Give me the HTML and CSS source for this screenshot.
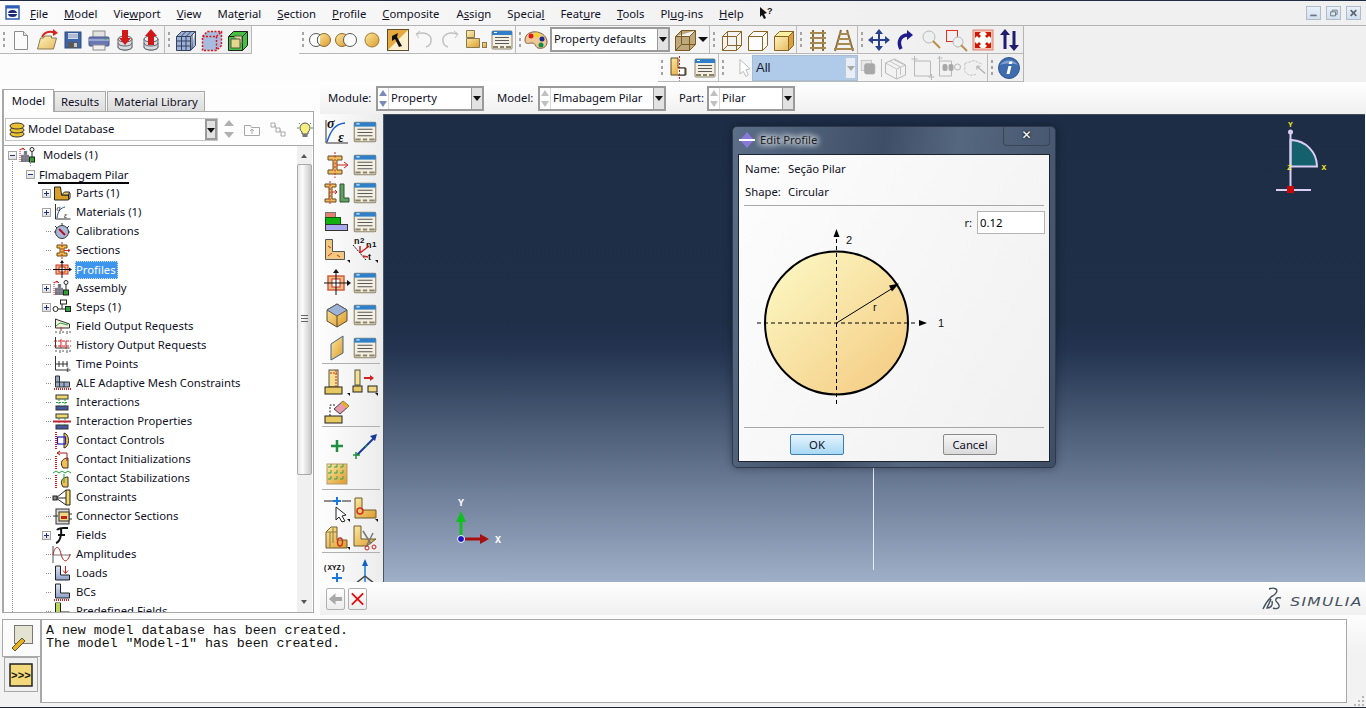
FILE: index.html
```html
<!DOCTYPE html>
<html lang="en">
<head>
<meta charset="utf-8">
<title>Abaqus/CAE</title>
<link rel="stylesheet" href="styles.css">
</head>
<body>
<svg class="defs" aria-hidden="true">
<defs>
<linearGradient id="gold" x1="0" y1="0" x2="1" y2="1"><stop offset="0" stop-color="#fbe9a0"/><stop offset="1" stop-color="#dd9a2c"/></linearGradient>
<linearGradient id="pale" x1="0" y1="0" x2="1" y2="1"><stop offset="0" stop-color="#fdf3bd"/><stop offset="1" stop-color="#e7bb62"/></linearGradient>
<linearGradient id="disc" x1="0.1" y1="0.1" x2="0.85" y2="0.9"><stop offset="0" stop-color="#fbf6c0"/><stop offset="1" stop-color="#f5cf88"/></linearGradient>
<linearGradient id="steel" x1="0" y1="0" x2="0" y2="1"><stop offset="0" stop-color="#dfe6f4"/><stop offset="1" stop-color="#8f9fc8"/></linearGradient>
<symbol id="table" viewBox="0 0 26 26"><rect x="3" y="4" width="20" height="18" rx="1" fill="#f3efe2" stroke="#8b8468"/><rect x="3" y="4" width="20" height="4" fill="#2f80c8"/><rect x="5" y="5" width="3" height="1" fill="#fff"/><path d="M6 10.500h14M6 13.500h14M6 16.500h14" stroke="#5a5a5a"/><path d="M4 20h5M11 20h4M17 20h5" stroke="#8b8468" stroke-width="2"/></symbol>
<symbol id="new" viewBox="0 0 26 26"><path d="M6.500 4.500h9l4 4v14h-13z" fill="#fbfbfb" stroke="#8c8c8c"/><path d="M15.500 4.500v4h4" fill="#e2e2e2" stroke="#8c8c8c"/></symbol>
<symbol id="open" viewBox="0 0 26 26"><path d="M3.500 22l3-11h3l1-2h7v2h5l-3 11z" fill="url(#pale)" stroke="#8a7a50"/><path d="M8 10c3-6 9-6 13-4" fill="none" stroke="#d7261e" stroke-width="2"/><path d="M19 2l5 4-5 3z" fill="#d7261e"/></symbol>
<symbol id="save" viewBox="0 0 26 26"><rect x="5" y="5" width="16" height="16" fill="#3d64a6" stroke="#2d4a80"/><rect x="8" y="6" width="10" height="6" fill="#d3dcea"/><path d="M8 8h10M8 10h10" stroke="#8c9bb8"/><rect x="8" y="15" width="10" height="6" fill="#585858"/><rect x="14" y="16" width="3" height="4" fill="#c8c8c8"/></symbol>
<symbol id="print" viewBox="0 0 26 26"><rect x="7" y="4" width="12" height="7" fill="#e2e2e2" stroke="#8c8c8c"/><rect x="3" y="10" width="20" height="9" rx="1" fill="#6878b4" stroke="#4a5688"/><rect x="3" y="12" width="20" height="2" fill="#9aa6d0"/><rect x="7" y="18" width="12" height="5" fill="#f2f2f2" stroke="#8c8c8c"/><rect x="18" y="12" width="3" height="1" fill="#5dbb5d"/></symbol>
<symbol id="dbdown" viewBox="0 0 26 26"><g fill="#d8dce0" stroke="#5c6268"><ellipse cx="13" cy="20" rx="7" ry="3"/><path d="M6 12v8c0 4 14 4 14 0v-8"/><ellipse cx="13" cy="12" rx="7" ry="3" fill="#eef0f2"/></g><path d="M6 16c0 4 14 4 14 0" fill="none" stroke="#5c6268"/><path d="M10 3h6v8h3l-6 7-6-7h3z" fill="#d01818"/></symbol>
<symbol id="dbup" viewBox="0 0 26 26"><g fill="#d8dce0" stroke="#5c6268"><ellipse cx="13" cy="20" rx="7" ry="3"/><path d="M6 12v8c0 4 14 4 14 0v-8"/><ellipse cx="13" cy="12" rx="7" ry="3" fill="#eef0f2"/></g><path d="M6 16c0 4 14 4 14 0" fill="none" stroke="#5c6268"/><path d="M13 2l6 7h-3v9h-6V9H7z" fill="#d01818"/></symbol>
<symbol id="cmesh" viewBox="0 0 26 26"><path d="M3.500 9.500h14v14h-14zM3.500 9.500l5-5h14l-5 5M17.500 23.500l5-5V4.500" fill="#9db0d8" stroke="#34425e"/><path d="M8.500 9.500v14M13 9.500v14M3.500 14h14M3.500 19h14M8 9.500l5-5M13 9.500l5-5M19 8v14" fill="none" stroke="#34425e"/></symbol>
<symbol id="cred" viewBox="0 0 26 26"><path d="M3.500 9.500h14v14h-14zM3.500 9.500l5-5h14v14l-5 5v-14z" fill="#a8bce0"/><path d="M3.500 9.500h14v14h-14zM3.500 9.500l5-5h14v14l-5 5M17.500 9.500l5-5" fill="none" stroke="#e01010" stroke-width="1.500" stroke-dasharray="2 1.500"/></symbol>
<symbol id="cgreen" viewBox="0 0 26 26"><path d="M3.500 9.500h14v14h-14zM3.500 9.500l5-5h14v14l-5 5" fill="#44c040" stroke="#222"/><path d="M6 12h9v9H6zM9 9h8v8" fill="#e4d88c" stroke="#555"/><path d="M17.500 9.500l5-5" stroke="#222"/></symbol>
<symbol id="venn1" viewBox="0 0 26 26"><circle cx="9" cy="13" r="6.500" fill="#fff" stroke="#555"/><circle cx="17" cy="13" r="6.500" fill="url(#gold)" stroke="#8a6a30"/><path d="M13 7.700a6.500 6.500 0 0 0 0 10.600" fill="#fff" stroke="#555"/></symbol>
<symbol id="venn2" viewBox="0 0 26 26"><circle cx="9" cy="13" r="6.500" fill="url(#gold)" stroke="#8a6a30"/><circle cx="17" cy="13" r="6.500" fill="#fff" stroke="#555"/></symbol>
<symbol id="circ" viewBox="0 0 26 26"><circle cx="13" cy="13" r="7" fill="url(#gold)" stroke="#a07a30"/></symbol>
<symbol id="pick" viewBox="0 0 26 26"><rect x="2.500" y="2.500" width="21" height="21" fill="#e8a840" stroke="#5a5030"/><path d="M3 23L23 3v20z" fill="#fbf1d0"/><path d="M7 9l6-3-1 4 5 9-3 1-4-8-3 2z" fill="#111"/></symbol>
<symbol id="undo" viewBox="0 0 26 26"><path d="M6 7c8-3 15 1 14 7 0 3-2 5-5 6" fill="none" stroke="#c0c0c0" stroke-width="1.500"/><path d="M9 4L5 7l3 4" fill="none" stroke="#c0c0c0"/></symbol>
<symbol id="redo" viewBox="0 0 26 26"><path d="M20 7c-8-3-15 1-14 7 0 3 2 5 5 6" fill="none" stroke="#c0c0c0" stroke-width="1.500"/><path d="M17 4l4 3-3 4" fill="none" stroke="#c0c0c0"/></symbol>
<symbol id="part" viewBox="0 0 26 26"><path d="M3.500 3.500h8v7h-8z" fill="url(#pale)" stroke="#8a7a50"/><path d="M3.500 11.500h13v9h-13z" fill="url(#gold)" stroke="#8a7a50"/><rect x="19.500" y="15.500" width="4" height="5" fill="url(#gold)" stroke="#8a7a50"/></symbol>
<symbol id="palette" viewBox="0 0 26 26"><path d="M3 13c0-6 6-9 12-8 6 1 10 5 10 10 0 6-6 7-9 6-3-1-2-5-6-5-3 0-7 2-7-3z" fill="#f0c898" stroke="#7a6040"/><circle cx="9" cy="9" r="2.500" fill="#e01818"/><circle cx="15" cy="8" r="2.500" fill="#f0d818"/><circle cx="20" cy="12" r="2.500" fill="#18288c"/><circle cx="19" cy="18" r="2.500" fill="#109040"/></symbol>
<symbol id="cshade" viewBox="0 0 26 26"><path d="M3.500 9.500h14v14h-14zM3.500 9.500l6-6h14v14l-6 6v-14l6-6" fill="#bda97c" stroke="#7a5a20"/><path d="M3.500 23.500l6-6h14M9.500 3.500v14" fill="none" stroke="#7a5a20"/></symbol>
<symbol id="wire" viewBox="0 0 26 26"><path d="M4.500 9.500h14v14h-14zM4.500 9.500l5-5h14v14l-5 5M18.500 9.500l5-5M9.500 4.500v14l-5 5M9.500 18.500h14" fill="none" stroke="#8a6420"/></symbol>
<symbol id="hid" viewBox="0 0 26 26"><path d="M4.500 9.500h14v14h-14zM4.500 9.500l5-5h14v14l-5 5M18.500 9.500l5-5" fill="#fdfdfd" stroke="#8a6420"/></symbol>
<symbol id="solid" viewBox="0 0 26 26"><path d="M4.500 9.500h14v14h-14z" fill="url(#pale)" stroke="#8a6420"/><path d="M4.500 9.500l5-5h14l-5 5z" fill="#fdf0a0" stroke="#8a6420"/><path d="M18.500 9.500l5-5v14l-5 5z" fill="#d8a040" stroke="#8a6420"/></symbol>
<symbol id="rail1" viewBox="0 0 26 26"><path d="M8 3v21M18 3v21" stroke="#8a6e3c" stroke-width="2"/><path d="M5 6h16M5 11h16M5 16h16M5 21h16" stroke="#a88a50" stroke-width="2"/></symbol>
<symbol id="rail2" viewBox="0 0 26 26"><path d="M10 3L4 24M16 3l6 21" stroke="#8a6e3c" stroke-width="2"/><path d="M8 7h10M7 12h12M6 17h14M3 22h20" stroke="#a88a50" stroke-width="2"/></symbol>
<symbol id="move" viewBox="0 0 26 26"><path d="M13 4v18M4 13h18" stroke="#28408c" stroke-width="2"/><path d="M13 2l4 5H9zM13 24l4-5H9zM2 13l5-4v8zM24 13l-5-4v8z" fill="#28408c"/></symbol>
<symbol id="rot" viewBox="0 0 26 26"><path d="M9 22C5 14 9 8 16 8" fill="none" stroke="#201c8c" stroke-width="3.500"/><path d="M15 3l6 5-6 5z" fill="#201c8c"/></symbol>
<symbol id="zoom" viewBox="0 0 26 26"><circle cx="11" cy="10" r="6" fill="#eef0f0" stroke="#b8b8b8"/><path d="M15 14l7 7" stroke="#b89048" stroke-width="2"/></symbol>
<symbol id="zbox" viewBox="0 0 26 26"><rect x="2.500" y="3.500" width="11" height="11" fill="none" stroke="#e03020"/><circle cx="14" cy="15" r="5" fill="#eef0f0" stroke="#b8b8b8"/><path d="M17 18l6 6" stroke="#b89048" stroke-width="2"/></symbol>
<symbol id="fit" viewBox="0 0 26 26"><rect x="3" y="3" width="20" height="20" fill="#f2c4b8" stroke="#e08070"/><rect x="5" y="5" width="16" height="16" fill="#fff"/><path d="M5 5h6l-2 2 2 2-2 2-2-2-2 2zM21 5h-6l2 2-2 2 2 2 2-2 2 2zM5 21h6l-2-2 2-2-2-2-2 2-2-2zM21 21h-6l2-2-2-2 2-2 2 2 2-2z" fill="#cc1800"/></symbol>
<symbol id="flip" viewBox="0 0 26 26"><path d="M9 22V7M18 4v15" stroke="#201c70" stroke-width="3"/><path d="M9 2l5 6H4zM18 24l5-6H13z" fill="#201c70"/></symbol>
<symbol id="lsel" viewBox="0 0 26 26"><path d="M5 3h7v10h8v7H5z" fill="url(#gold)" stroke="#5a4a20"/><path d="M12 13h7v7h-7" fill="#fff" stroke="#222"/><path d="M13.500 1v25" stroke="#e01010" stroke-dasharray="2 1.500"/></symbol>
<symbol id="cursor" viewBox="0 0 26 26"><path d="M7 3l12 11-5 1 3 6-3 2-3-6-4 3z" fill="#fff" stroke="#b0b0b0"/></symbol>
<symbol id="g1" viewBox="0 0 26 26"><rect x="5" y="4" width="12" height="12" fill="#e8e8e8" stroke="#c0c0c0"/><rect x="9" y="8" width="12" height="12" rx="2" fill="#a8a8a8" stroke="#a8a8a8"/></symbol>
<symbol id="g2" viewBox="0 0 26 26"><path d="M3 8l9-4 11 6v10l-9 4-11-6z" fill="none" stroke="#b8b8b8"/><path d="M3 8l11 6v10M14 14l9-4M7 6l11 6v8M11 4.500l10 5" fill="none" stroke="#c4c4c4"/></symbol>
<symbol id="g3" viewBox="0 0 26 26"><path d="M5 6h16v15H5z" fill="none" stroke="#b8b8b8"/><path d="M2 4h6M5 1v6M19 22h6M22 19v6" stroke="#b8b8b8"/></symbol>
<symbol id="g4" viewBox="0 0 26 26"><path d="M3 6h12v15H3z" fill="none" stroke="#b8b8b8"/><path d="M1 3h5M3 1v5" stroke="#b8b8b8"/><rect x="6" y="9" width="5" height="7" rx="2" fill="#a8a8a8"/><rect x="12" y="9" width="5" height="7" rx="2" fill="#a8a8a8"/><circle cx="21" cy="12" r="3" fill="none" stroke="#b8b8b8"/></symbol>
<symbol id="g5" viewBox="0 0 26 26"><path d="M2 8l10-3 9 4M2 8v9l5 4 7-1" fill="none" stroke="#c0c0c0" stroke-dasharray="3 1"/><path d="M15 11l9 8" stroke="#b0b0b0" stroke-width="1.500"/><path d="M15 11h4M15 11v4" stroke="#b0b0b0"/></symbol>
<symbol id="info" viewBox="0 0 26 26"><circle cx="13" cy="13" r="10.500" fill="#3f6cae" stroke="#2f5590"/><path d="M4 10a10 8 0 0 1 18 0c-5-2-13-2-18 0z" fill="#7e9fcf"/><path d="M13.500 6.500h3l-.8 2.500h-3zM12.500 11h3l-2 8h-3z" fill="#fff"/></symbol>

<symbol id="t-models" viewBox="0 0 20 19"><path d="M3 16V9h3V5h3v4h2v7z" fill="#707080"/><path d="M3 12h8M3 9h8M6 5v11M9 5v11" stroke="#a0a0a8" stroke-width=".5"/><path d="M2 3v14" stroke="#d02020" stroke-dasharray="1 1"/><path d="M5 2v2M2 4l3-2 2 2" stroke="#d02020" fill="none"/><circle cx="14" cy="3.500" r="2" fill="#fff" stroke="#222"/><path d="M14 6v5" stroke="#222"/><rect x="11.500" y="11" width="5" height="5" fill="#30a030" stroke="#222"/></symbol>
<symbol id="t-parts" viewBox="0 0 20 19"><path d="M2.500 3h6l1 8h7v5h-14z" fill="#d9a028" stroke="#222"/><path d="M9.500 11l3-3h5l-1 3z M16.500 16l1.500-2v-5" fill="#f2cc70" stroke="#222"/></symbol>
<symbol id="t-mat" viewBox="0 0 20 19"><path d="M3.500 1v15h15" fill="none" stroke="#333"/><path d="M5 15c1-8 4-10 8-11" fill="none" stroke="#2848a8"/><text x="4.500" y="8" class="sy">σ</text><text x="12" y="15" class="sy">ε</text></symbol>
<symbol id="t-cal" viewBox="0 0 20 19"><circle cx="10" cy="10" r="6.500" fill="#a8b8d8" stroke="#333"/><path d="M7 7l6 6" stroke="#b01020" stroke-width="2"/><path d="M10 1v2M3 4l2 2M17 4l-2 2M2 10h1M18 10h-1" stroke="#333"/></symbol>
<symbol id="t-sec" viewBox="0 0 20 19"><path d="M5 4h10v3h-3v5h3v3H5v-3h3V7H5z" fill="#efbd50" stroke="#6a4a10"/><path d="M10 1v17" stroke="#d02020" stroke-dasharray="2 1"/><path d="M12 9.500h6M16 8l2 1.500-2 1.500" stroke="#d02020" fill="none"/></symbol>
<symbol id="t-prof" viewBox="0 0 20 19"><rect x="4" y="5" width="12" height="9" fill="#eebb88" stroke="#d03020"/><rect x="7" y="7" width="6" height="5" fill="#fff" stroke="#d03020"/><path d="M10 1v17M1 9.500h18" stroke="#111"/><path d="M10 0l2 3H8zM20 9.500l-3-2v4z" fill="#111"/></symbol>
<symbol id="t-steps" viewBox="0 0 20 19"><circle cx="3.500" cy="11" r="2.500" fill="#fff" stroke="#222"/><path d="M6 11h8M10 11V6" stroke="#222"/><rect x="8.500" y="2" width="6" height="4" fill="#fff" stroke="#222"/><rect x="13.500" y="8.500" width="5" height="5" fill="#30a040" stroke="#222"/></symbol>
<symbol id="t-field" viewBox="0 0 20 19"><path d="M3.500 2v9h14V7L6 3z" fill="#f4f0e0" stroke="#333"/><path d="M4 9l4-3 8 2" stroke="#30a040" fill="none"/><path d="M3 15h2M8 14v3M10 15h2M15 14v3M17 15h2" stroke="#555"/><path d="M9 10v4" stroke="#d02020"/></symbol>
<symbol id="t-hist" viewBox="0 0 20 19"><path d="M3.500 1v11h14" fill="none" stroke="#333"/><path d="M2 5h17M2 10h17" stroke="#d02020" stroke-dasharray="3 1"/><path d="M9 3v9M14 5v8" stroke="#d02020"/><path d="M3 15h2M8 14v3M10 15h2M15 14v3M17 15h2" stroke="#555"/></symbol>
<symbol id="t-time" viewBox="0 0 20 19"><path d="M3.500 1v14h15" fill="none" stroke="#333"/><path d="M3 9h13M7 6v6M11 6v6M15 6v6" stroke="#333"/><text x="14.500" y="17" class="sy">t</text></symbol>
<symbol id="t-ale" viewBox="0 0 20 19"><path d="M3.500 12V2h4v6h10v5h-14z" fill="#9aa8c8" stroke="#333"/><path d="M7.500 8v5M12 8v5M3.500 8h4" stroke="#333"/><path d="M2 15h17" stroke="#d02020" stroke-width="2" stroke-dasharray="1 1"/></symbol>
<symbol id="t-int" viewBox="0 0 20 19"><rect x="4" y="2" width="12" height="4" fill="#f0d870" stroke="#333"/><rect x="4" y="13" width="12" height="4" fill="#4858a0" stroke="#333"/><path d="M7 6v7M13 6v7M4 9.500h12" stroke="#20a040" stroke-dasharray="2 1"/></symbol>
<symbol id="t-intp" viewBox="0 0 20 19"><rect x="4" y="2" width="12" height="4" fill="#f0d870" stroke="#333"/><rect x="4" y="13" width="12" height="4" fill="#4858a0" stroke="#333"/><path d="M7 6v7M13 6v7" stroke="#20a040" stroke-dasharray="2 1"/><path d="M1 9.500h18" stroke="#c02030" stroke-width="2"/></symbol>
<symbol id="t-cc" viewBox="0 0 20 19"><path d="M12 2c6 1 6 14 0 15z" fill="#f0c050" stroke="#333"/><path d="M4 1v17" stroke="#d02020" stroke-width="2" stroke-dasharray="1 1"/><rect x="5.500" y="6" width="8" height="7" fill="none" stroke="#2020c0" stroke-width="1.200"/></symbol>
<symbol id="t-ci" viewBox="0 0 20 19"><path d="M11 18c-4-6 0-10 5-10v10z" fill="#f0c050" stroke="#333"/><path d="M4 6v13" stroke="#d02020" stroke-width="2" stroke-dasharray="1 1"/><path d="M5 3h10v8M5 3l3-2M5 3l3 2" fill="none" stroke="#b01818"/></symbol>
<symbol id="t-cs" viewBox="0 0 20 19"><path d="M11 18c-4-6 0-10 5-10v10z" fill="#f0c050" stroke="#333"/><path d="M4 6v13" stroke="#d02020" stroke-width="2" stroke-dasharray="1 1"/><path d="M1 4l3-2 3 2 3-2 3 2 3-2 3 2" fill="none" stroke="#20a040"/><path d="M12 5v9" stroke="#20a040"/></symbol>
<symbol id="t-con" viewBox="0 0 20 19"><path d="M14 2h4v15h-4z" fill="#f4d860" stroke="#222"/><path d="M14 2L4 10l10 7M3 10h11" fill="none" stroke="#222"/><rect x="1" y="8" width="4" height="4" fill="#888" stroke="#222"/></symbol>
<symbol id="t-conn" viewBox="0 0 20 19"><rect x="4" y="2" width="13" height="15" fill="#d8d8d8" stroke="#333"/><rect x="7" y="5" width="10" height="9" fill="#f0d880" stroke="#333"/><rect x="9" y="9" width="6" height="3" fill="#c02020"/><path d="M1 9h5M17 7h3M17 12h3" stroke="#333"/></symbol>
<symbol id="t-f" viewBox="0 0 20 19"><path d="M5 4c2-3 6-2 11-2M9 3c1 5-1 13-5 14M6 9h7" fill="none" stroke="#111" stroke-width="2"/></symbol>
<symbol id="t-amp" viewBox="0 0 20 19"><path d="M1 1v17" stroke="#555"/><path d="M1 10h18" stroke="#777"/><path d="M1 10C3 0 7 0 9 9c2 9 7 9 9 0" fill="none" stroke="#b02020"/></symbol>
<symbol id="t-load" viewBox="0 0 20 19"><path d="M3.500 2h5v9h9v5h-14z" fill="url(#steel)" stroke="#222"/><path d="M13.500 2v7M11 6.500l2.500 3 2.500-3" fill="none" stroke="#d02020"/></symbol>
<symbol id="t-bc" viewBox="0 0 20 19"><path d="M3.500 1h5v9h9v5h-14z" fill="url(#steel)" stroke="#222"/><path d="M2 17h15" stroke="#d02020" stroke-width="2" stroke-dasharray="1 1"/></symbol>
<symbol id="t-pre" viewBox="0 0 20 19"><path d="M3.500 1h5v9h9v5h-14z" fill="url(#steel)" stroke="#222"/><rect x="4" y="1" width="4" height="9" fill="#b8d858"/></symbol>

<symbol id="s-sig" viewBox="0 0 28 28"><path d="M3 2v23h22" fill="none" stroke="#333"/><path d="M4 24C8 12 12 6 22 5" fill="none" stroke="#1860c8" stroke-width="1.500"/><text x="4" y="10" class="sg">σ</text><text x="15" y="24" class="sg">ε</text></symbol>
<symbol id="s-ib" viewBox="0 0 28 28"><path d="M5 5h14v4h-5v10h5v4H5v-4h5V9H5z" fill="#efbd60" stroke="#6a4a20"/><path d="M12 1v26" stroke="#d02020" stroke-dasharray="2 1.500"/><path d="M14 14h10M21 11l4 3-4 3" fill="none" stroke="#d02020"/></symbol>
<symbol id="s-ibl" viewBox="0 0 28 28"><path d="M2 5h11v3h-4v12h4v3H2v-3h4V8H2z" fill="#efbd60" stroke="#6a4a20"/><path d="M7 2v24" stroke="#d02020" stroke-dasharray="2 1.500"/><path d="M9 13h4M12 11l2 2-2 2" fill="none" stroke="#d02020"/><path d="M17 5h4v14h5v4h-9z" fill="#60a060" stroke="#305030"/></symbol>
<symbol id="s-lay" viewBox="0 0 28 28"><rect x="2.500" y="4.500" width="10" height="5" fill="#e88070" stroke="#777"/><rect x="2.500" y="9.500" width="15" height="7" fill="#10b010" stroke="#076007"/><rect x="2.500" y="16.500" width="22" height="6" fill="#a8a8f0" stroke="#333"/></symbol>
<symbol id="s-lo" viewBox="0 0 28 28"><path d="M2.500 3.500h7v12h12v8h-19z" fill="#f0c880" stroke="#555"/><path d="M5 10l3 2M5 20l4-3M14 19l3 2" stroke="#d03020"/><path d="M24 24h3v3z" fill="#111"/></symbol>
<symbol id="s-nt" viewBox="0 0 28 28"><text x="3" y="8" class="st">n</text><text x="9" y="7" class="st2">2</text><text x="15" y="12" class="st">n</text><text x="21" y="11" class="st2">1</text><text x="17" y="24" class="st">t</text><path d="M2 9l13 15" stroke="#111" stroke-dasharray="2 1"/><path d="M9 17l0-7M9 17l9-7M12 20l5 1" stroke="#d02020" stroke-width="1.500"/><path d="M24 24h3v3z" fill="#111"/></symbol>
<symbol id="s-pr" viewBox="0 0 28 28"><rect x="5" y="7" width="16" height="14" fill="#eebb88" stroke="#d06040" stroke-width="1.500"/><rect x="9" y="10" width="8" height="8" fill="#fff" stroke="#d03020"/><path d="M13 2v24M1 14h25" stroke="#111"/><path d="M13 0l3 4h-6zM28 14l-4-3v6z" fill="#111"/></symbol>
<symbol id="s-cube" viewBox="0 0 28 28"><path d="M14 3l10 6v11l-10 6L4 20V9z" fill="url(#gold)" stroke="#5a4a30"/><path d="M14 3l10 6-10 6L4 9z" fill="#9db4d8" stroke="#5a5a60"/><path d="M14 15v11" stroke="#5a4a30"/></symbol>
<symbol id="s-shell" viewBox="0 0 28 28"><path d="M8 10l12-8v17L8 26z" fill="url(#gold)" stroke="#40608c"/></symbol>
<symbol id="s-as" viewBox="0 0 28 28"><rect x="6" y="1" width="9" height="17" fill="#f6e090" stroke="#554"/><rect x="2" y="18" width="17" height="7" fill="#e8c860" stroke="#222"/><path d="M7 4h7M13 1v18" stroke="#d02020" stroke-dasharray="2 1"/><path d="M24 24h3v3z" fill="#111"/></symbol>
<symbol id="s-asb" viewBox="0 0 28 28"><rect x="4" y="1" width="5" height="15" fill="#f6e090" stroke="#554"/><rect x="2" y="17" width="9" height="6" fill="#e8c860" stroke="#222"/><rect x="17" y="17" width="9" height="6" fill="#f0d880" stroke="#222"/><path d="M13 9h7" stroke="#d02020" stroke-width="2"/><path d="M19 6l4 3-4 3z" fill="#d02020"/><path d="M24 24h3v3z" fill="#111"/></symbol>
<symbol id="s-er" viewBox="0 0 28 28"><rect x="2" y="19" width="17" height="7" fill="#e8c860" stroke="#222"/><path d="M7 19V8h5" fill="none" stroke="#222" stroke-dasharray="2 1.500"/><path d="M11 12l9-8 6 5-9 8z" fill="#e89aa8" stroke="#444"/><path d="M18 6l6 5 2-2-6-5z" fill="#e8b020"/></symbol>
<symbol id="s-plus" viewBox="0 0 28 28"><path d="M14 8v12M8 14h12" stroke="#209040" stroke-width="2.500"/></symbol>
<symbol id="s-line" viewBox="0 0 28 28"><path d="M6 23L24 5" stroke="#1a3a98" stroke-width="2"/><path d="M26 2l-2 7-5-5z" fill="#1a3a98"/><path d="M2 23h7M5 20v7M14 15l2-2" stroke="#209040" stroke-width="1.500"/></symbol>
<symbol id="s-grid" viewBox="0 0 28 28"><rect x="4" y="4" width="20" height="20" fill="url(#gold)" stroke="#b89868"/><path d="M5 7h18M5 13h18M5 19h18M8 4v18M14 4v18M20 4v18" stroke="#30a050" stroke-dasharray="3 3"/></symbol>
<symbol id="s-pkp" viewBox="0 0 28 28"><path d="M1 6h9M19 6h9" stroke="#222"/><path d="M14 2v8M10 6h8" stroke="#1878e0" stroke-width="2"/><path d="M13 12l10 8-4 1 3 5-3 1-3-5-3 3z" fill="#fff" stroke="#222"/><path d="M24 24h3v3z" fill="#111"/></symbol>
<symbol id="s-rnd" viewBox="0 0 28 28"><path d="M4 3h7v12h14v8H4z" fill="url(#gold)" stroke="#6a5a30"/><circle cx="9" cy="16" r="3" fill="none" stroke="#d03020" stroke-width="1.500"/><path d="M24 24h3v3z" fill="#111"/></symbol>
<symbol id="s-blk" viewBox="0 0 28 28"><path d="M3 9l5-5h6v13h10v8H3z" fill="url(#gold)" stroke="#6a5a30"/><path d="M7 9v15M10 5v15M3 9h11" stroke="#8a7a40"/><ellipse cx="17" cy="19" rx="2.500" ry="4" fill="none" stroke="#d03020" stroke-width="1.500"/><path d="M24 24h3v3z" fill="#111"/></symbol>
<symbol id="s-cut" viewBox="0 0 28 28"><path d="M3 3h7v13h15l-9 7H3z" fill="url(#gold)" stroke="#6a5a30"/><path d="M12 8l8 13M22 10l-6 12" stroke="#777" stroke-width="1.500"/><circle cx="16" cy="25" r="2" fill="none" stroke="#c02020"/><circle cx="23" cy="24" r="2" fill="none" stroke="#c02020"/></symbol>
<symbol id="s-xyz" viewBox="0 0 28 28"><text x="0" y="12" class="sx">(XYZ)</text><path d="M14 15v10M9 20h10" stroke="#1878e0" stroke-width="2"/></symbol>
<symbol id="s-dat" viewBox="0 0 28 28"><path d="M14 4v22" stroke="#1878e0" stroke-width="1.500"/><path d="M14 1l3 7h-6z" fill="#1060c0"/><path d="M14 18L4 26M14 18l10 8" stroke="#444" stroke-width="1.500"/></symbol>
</defs>
</svg>

<div class="app">
  <header class="menubar">
    <svg class="appicon" viewBox="0 0 15 15"><rect x="1" y="1" width="13" height="13" fill="#fff" stroke="#2e5eb8" stroke-width="1.500"/><rect x="1" y="1" width="13" height="2.500" fill="#2e5eb8"/><ellipse cx="7.500" cy="8.500" rx="4.500" ry="3.500" fill="#1a2a78"/><path d="M3 8.500h9" stroke="#fff"/></svg>
    <nav class="menus">
      <span class="m"><u>F</u>ile</span>
      <span class="m"><u>M</u>odel</span>
      <span class="m">Vie<u>w</u>port</span>
      <span class="m"><u>V</u>iew</span>
      <span class="m">Mat<u>e</u>rial</span>
      <span class="m"><u>S</u>ection</span>
      <span class="m"><u>P</u>rofile</span>
      <span class="m"><u>C</u>omposite</span>
      <span class="m">A<u>s</u>sign</span>
      <span class="m">Specia<u>l</u></span>
      <span class="m">Feat<u>u</u>re</span>
      <span class="m"><u>T</u>ools</span>
      <span class="m">Pl<u>u</u>g-ins</span>
      <span class="m"><u>H</u>elp</span>
      <svg class="whatsthis" viewBox="0 0 14 14"><path d="M1 1l7 6-3 1 2 4-2 1-2-4-2 2z" fill="#111"/><text x="8" y="8" class="wq">?</text></svg>
    </nav>
    <div class="winbtns">
      <span class="wb"><svg viewBox="0 0 16 14"><path d="M4 10h8" stroke="#6a7484" stroke-width="2"/></svg></span>
      <span class="wb"><svg viewBox="0 0 16 14"><path d="M4.500 5.500h6v5h-6zM6.500 5V3.500h6v5H11" fill="none" stroke="#5a6474"/></svg></span>
      <span class="wb"><svg viewBox="0 0 16 14"><path d="M4.500 3.500l7 7M11.500 3.500l-7 7" stroke="#5a6474" stroke-width="2"/></svg></span>
    </div>
  </header>

  <section class="toolbars">
    <div class="tb-rows">
      <div class="tb-row">
        <div class="tg tg-file">
          <i class="grip"></i>
          <svg class="i"><use href="#new"/></svg><svg class="i"><use href="#open"/></svg><svg class="i"><use href="#save"/></svg><svg class="i"><use href="#print"/></svg><svg class="i"><use href="#dbdown"/></svg><svg class="i"><use href="#dbup"/></svg>
          <b class="sep"></b><i class="grip"></i>
          <svg class="i"><use href="#cmesh"/></svg><svg class="i"><use href="#cred"/></svg><svg class="i"><use href="#cgreen"/></svg>
        </div>
        <div class="tg tg-view">
          <i class="grip"></i>
          <svg class="i"><use href="#venn1"/></svg><svg class="i"><use href="#venn2"/></svg><svg class="i"><use href="#circ"/></svg><svg class="i"><use href="#pick"/></svg><svg class="i"><use href="#undo"/></svg><svg class="i"><use href="#redo"/></svg><svg class="i"><use href="#part"/></svg><svg class="i"><use href="#table"/></svg>
          <b class="sep"></b><i class="grip"></i>
          <svg class="i i-pal"><use href="#palette"/></svg>
          <div class="combo combo-def"><span class="ctext">Property defaults</span><span class="carrow"></span></div>
          <svg class="i i-sh"><use href="#cshade"/></svg><span class="drop"></span>
          <b class="sep"></b><i class="grip"></i>
          <svg class="i"><use href="#wire"/></svg><svg class="i"><use href="#hid"/></svg><svg class="i"><use href="#solid"/></svg>
          <b class="sep"></b><i class="grip"></i>
          <svg class="i"><use href="#rail1"/></svg><svg class="i"><use href="#rail2"/></svg>
          <b class="sep"></b><i class="grip"></i>
          <svg class="i"><use href="#move"/></svg><svg class="i"><use href="#rot"/></svg><svg class="i"><use href="#zoom"/></svg><svg class="i"><use href="#zbox"/></svg><svg class="i"><use href="#fit"/></svg><svg class="i"><use href="#flip"/></svg>
        </div>
      </div>
      <div class="tb-row tb-row2">
        <div class="tg tg-sel">
          <i class="grip"></i>
          <svg class="i"><use href="#lsel"/></svg><svg class="i"><use href="#table"/></svg>
          <b class="sep"></b><i class="grip"></i>
          <svg class="i i-cur"><use href="#cursor"/></svg>
          <div class="combo-all"><span>All</span><span class="allarrow"></span></div>
          <svg class="i i-g1"><use href="#g1"/></svg>
          <b class="sep sep-soft"></b>
          <svg class="i i-w"><use href="#g2"/></svg><svg class="i i-w"><use href="#g3"/></svg><svg class="i i-w"><use href="#g4"/></svg><svg class="i i-n"><use href="#g5"/></svg>
          <b class="sep"></b><i class="grip"></i>
          <svg class="i"><use href="#info"/></svg>
        </div>
      </div>
    </div>
    <div class="tb-fill"></div>
  </section>

  <main class="workspace">
    <aside class="leftpanel">
      <div class="tabs">
        <span class="tab tab-on">Model</span>
        <span class="tab">Results</span>
        <span class="tab">Material Library</span>
      </div>
      <div class="panel">
        <div class="dbbar">
          <div class="dbcombo">
            <svg class="dbicon" viewBox="0 0 18 16"><g fill="#e8c030" stroke="#333"><ellipse cx="9" cy="12" rx="7" ry="3"/><ellipse cx="9" cy="8" rx="7" ry="3"/><ellipse cx="9" cy="4" rx="7" ry="3"/></g></svg>
            <span class="ctext">Model Database</span><span class="carrow"></span>
          </div>
          <svg class="updn" viewBox="0 0 14 22"><path d="M7 2l5 6H2zM7 20l5-6H2z" fill="#b0b0b0"/></svg>
          <svg class="dbtool dbt1" viewBox="0 0 18 16"><path d="M1.500 4.500h6l1 2h8v8h-15z" fill="none" stroke="#a8a8a8"/><path d="M9 13V8M7 10l2-2 2 2" fill="none" stroke="#a8a8a8"/></svg>
          <svg class="dbtool dbt2" viewBox="0 0 18 16"><path d="M2 2h4v4H2zM7 7h4v4H7zM12 11h4v4h-4zM6 4l1 3M11 9l1 2" fill="none" stroke="#a8a8a8"/></svg>
          <svg class="dbtool dbt3" viewBox="0 0 18 18"><path d="M6 11a5 5 0 1 1 6 0v2H6z" fill="#f6f080" stroke="#555"/><rect x="6.500" y="13" width="5" height="3" fill="#777"/><path d="M1 7h2M15 7h2M3 2l1 1M15 2l-1 1" stroke="#40a040"/></svg>
        </div>
        <div class="treebox">
          <div class="tree">
            <div class="row l0"><span class="exp minus"></span><svg class="ti"><use href="#t-models"/></svg><span class="lb lb0">Models (1)</span></div>
            <div class="row l1"><span class="exp minus"></span><span class="lb lb1 cur">Flmabagem Pilar</span></div>
            <div class="row l2"><span class="exp plus"></span><svg class="ti"><use href="#t-parts"/></svg><span class="lb">Parts (1)</span></div>
            <div class="row l2"><span class="exp plus"></span><svg class="ti"><use href="#t-mat"/></svg><span class="lb">Materials (1)</span></div>
            <div class="row l2"><span class="stub"></span><svg class="ti"><use href="#t-cal"/></svg><span class="lb">Calibrations</span></div>
            <div class="row l2"><span class="stub"></span><svg class="ti"><use href="#t-sec"/></svg><span class="lb">Sections</span></div>
            <div class="row l2"><span class="stub"></span><svg class="ti"><use href="#t-prof"/></svg><span class="lb sel">Profiles</span></div>
            <div class="row l2"><span class="exp plus"></span><svg class="ti"><use href="#t-models"/></svg><span class="lb">Assembly</span></div>
            <div class="row l2"><span class="exp plus"></span><svg class="ti"><use href="#t-steps"/></svg><span class="lb">Steps (1)</span></div>
            <div class="row l2"><span class="stub"></span><svg class="ti"><use href="#t-field"/></svg><span class="lb">Field Output Requests</span></div>
            <div class="row l2"><span class="stub"></span><svg class="ti"><use href="#t-hist"/></svg><span class="lb">History Output Requests</span></div>
            <div class="row l2"><span class="stub"></span><svg class="ti"><use href="#t-time"/></svg><span class="lb">Time Points</span></div>
            <div class="row l2"><span class="stub"></span><svg class="ti"><use href="#t-ale"/></svg><span class="lb">ALE Adaptive Mesh Constraints</span></div>
            <div class="row l2"><span class="stub"></span><svg class="ti"><use href="#t-int"/></svg><span class="lb">Interactions</span></div>
            <div class="row l2"><span class="stub"></span><svg class="ti"><use href="#t-intp"/></svg><span class="lb">Interaction Properties</span></div>
            <div class="row l2"><span class="stub"></span><svg class="ti"><use href="#t-cc"/></svg><span class="lb">Contact Controls</span></div>
            <div class="row l2"><span class="stub"></span><svg class="ti"><use href="#t-ci"/></svg><span class="lb">Contact Initializations</span></div>
            <div class="row l2"><span class="stub"></span><svg class="ti"><use href="#t-cs"/></svg><span class="lb">Contact Stabilizations</span></div>
            <div class="row l2"><span class="stub"></span><svg class="ti"><use href="#t-con"/></svg><span class="lb">Constraints</span></div>
            <div class="row l2"><span class="stub"></span><svg class="ti"><use href="#t-conn"/></svg><span class="lb">Connector Sections</span></div>
            <div class="row l2"><span class="exp plus"></span><svg class="ti"><use href="#t-f"/></svg><span class="lb">Fields</span></div>
            <div class="row l2"><span class="stub"></span><svg class="ti"><use href="#t-amp"/></svg><span class="lb">Amplitudes</span></div>
            <div class="row l2"><span class="stub"></span><svg class="ti"><use href="#t-load"/></svg><span class="lb">Loads</span></div>
            <div class="row l2"><span class="stub"></span><svg class="ti"><use href="#t-bc"/></svg><span class="lb">BCs</span></div>
            <div class="row l2"><span class="stub"></span><svg class="ti"><use href="#t-pre"/></svg><span class="lb">Predefined Fields</span></div>
          </div>
          <div class="vscroll">
            <span class="sarrow sup"></span>
            <span class="thumb"><i></i></span>
            <span class="strack"></span>
            <span class="sarrow sdn"></span>
          </div>
        </div>
      </div>
    </aside>

    <div class="right">
      <div class="context">
        <span class="clabel cl-mod">Module:</span>
        <div class="combo cb-mod"><span class="spin"></span><span class="ctext">Property</span><span class="carrow"></span></div>
        <span class="clabel cl-model">Model:</span>
        <div class="combo cb-model"><span class="spin spin-off"></span><span class="ctext">Flmabagem Pilar</span><span class="carrow"></span></div>
        <span class="clabel cl-part">Part:</span>
        <div class="combo cb-part"><span class="spin spin-off"></span><span class="ctext">Pilar</span><span class="carrow"></span></div>
      </div>
      <div class="mid">
        <div class="toolstrip">
          <div class="tr"><svg class="si"><use href="#s-sig"/></svg><svg class="si"><use href="#table"/></svg></div>
          <div class="tr g5"><svg class="si"><use href="#s-ib"/></svg><svg class="si"><use href="#table"/></svg></div>
          <div class="tr"><svg class="si"><use href="#s-ibl"/></svg><svg class="si"><use href="#table"/></svg></div>
          <div class="tr g1"><svg class="si"><use href="#s-lay"/></svg><svg class="si"><use href="#table"/></svg></div>
          <div class="tr"><svg class="si"><use href="#s-lo"/></svg><svg class="si"><use href="#s-nt"/></svg></div>
          <div class="tr g5"><svg class="si"><use href="#s-pr"/></svg><svg class="si"><use href="#table"/></svg></div>
          <div class="tr g4"><svg class="si"><use href="#s-cube"/></svg><svg class="si"><use href="#table"/></svg></div>
          <div class="tr g5"><svg class="si"><use href="#s-shell"/></svg><svg class="si"><use href="#table"/></svg></div>
          <hr class="ts">
          <div class="tr g4"><svg class="si"><use href="#s-as"/></svg><svg class="si"><use href="#s-asb"/></svg></div>
          <div class="tr"><svg class="si"><use href="#s-er"/></svg></div>
          <hr class="ts">
          <div class="tr g5"><svg class="si"><use href="#s-plus"/></svg><svg class="si"><use href="#s-line"/></svg></div>
          <div class="tr"><svg class="si"><use href="#s-grid"/></svg></div>
          <hr class="ts">
          <div class="tr g4"><svg class="si"><use href="#s-pkp"/></svg><svg class="si"><use href="#s-rnd"/></svg></div>
          <div class="tr"><svg class="si"><use href="#s-blk"/></svg><svg class="si"><use href="#s-cut"/></svg></div>
          <hr class="ts">
          <div class="tr"><svg class="si"><use href="#s-xyz"/></svg><svg class="si"><use href="#s-dat"/></svg></div>
        </div>
        <div class="viewport">
          <svg class="vp-line" viewBox="0 0 3 110"><path d="M1.500 0v105" stroke="#e8ecf4"/></svg>
          <svg class="triad-tr" viewBox="0 0 70 80">
            <path d="M14.500 25h1A26.500 26.500 0 0 1 41 51.500H14.500z" fill="#14606c" stroke="#dccdf4" stroke-width="2"/>
            <path d="M14.500 17v58" stroke="#dccdf4" stroke-width="2"/>
            <path d="M0 75h35" stroke="#dccdf4" stroke-width="2"/>
            <circle cx="14.500" cy="17" r="2.500" fill="#dccdf4"/>
            <rect x="11" y="71" width="7" height="7" fill="#c80a0a"/>
            <text x="14.500" y="12" class="tx">Y</text><text x="48" y="55" class="tx">X</text><text x="13.500" y="55" class="tx">Z</text>
          </svg>
          <svg class="triad-bl" viewBox="0 0 64 64">
            <path d="M10 44V22" stroke="#10c020" stroke-width="3"/><path d="M10 14l5 11H5z" fill="#10c020"/>
            <path d="M14 42h20" stroke="#a81010" stroke-width="3"/><path d="M38 42l-9-5v10z" fill="#a81010"/>
            <circle cx="10" cy="42" r="3.500" fill="#1818c0" stroke="#fff"/>
            <text x="10" y="9" class="bx">Y</text><text x="47" y="46" class="bx">X</text>
          </svg>

          <div class="dialog">
            <div class="dtitle">
              <svg class="dicon" viewBox="0 0 16 16"><path d="M8 0l7 8-7 8-7-8z" fill="#8a78d8"/><path d="M0 8h16" stroke="#fff" stroke-width="2"/></svg>
              <span class="dname">Edit Profile</span>
              <span class="dclose">✕</span>
            </div>
            <div class="dbody">
              <div class="drow"><span class="dk">Name:</span><span>Seção Pilar</span></div>
              <div class="drow"><span class="dk">Shape:</span><span>Circular</span></div>
              <hr class="dsep">
              <div class="dcontent">
                <svg class="section" viewBox="0 0 210 221">
                  <circle cx="92.500" cy="117" r="71.500" fill="url(#disc)" stroke="#000" stroke-width="2"/>
                  <path d="M92.500 26v172M13 117h158" stroke="#000" stroke-dasharray="4 3"/>
                  <path d="M92.500 117l58-36" stroke="#000"/>
                  <path d="M155 77.500l-10 2 3 6zM92.500 23l-3 8h6zM183 117l-8-3v6z" fill="#000"/>
                  <text x="194" y="121" class="ax">1</text><text x="102" y="38" class="ax">2</text><text x="129" y="105" class="ax">r</text>
                </svg>
                <div class="rfield"><span class="rl">r:</span><span class="rinput">0.12</span></div>
              </div>
              <hr class="dsep">
              <div class="dbtns"><span class="btn btn-ok">OK</span><span class="btn">Cancel</span></div>
            </div>
          </div>
        </div>
      </div>
      <div class="prompt">
        <span class="pbtn"><svg viewBox="0 0 18 18"><path d="M2 9l7-6v4h7v4H9v4z" fill="#a8a8a8"/></svg></span>
        <span class="pbtn"><svg viewBox="0 0 18 18"><path d="M3 3l12 12M15 3L3 15" stroke="#e01010" stroke-width="2"/></svg></span>
        <div class="simulia">
          <svg class="dsmark" viewBox="0 0 22 24"><path d="M8 2c5-2 10 0 7 4-1 2-3 3-5 4M11 9c-3 3-7 8-9 13M10 12c-1 3-3 6-4 9 4 0 6-3 5-7M20 11c-3-1-6 0-5 3 1 2 4 3 3 6-1 2-4 2-6 1" fill="none" stroke="#44525f" stroke-width="1.400"/></svg>
          <span class="simtext">SIMULIA</span>
        </div>
      </div>
    </div>
  </main>

  <footer class="bottom">
    <div class="msgtabs">
      <div class="mt mt-on"><svg class="mi" viewBox="0 0 24 28"><rect x="4.500" y="1.500" width="18" height="18" fill="#e4e2d0" stroke="#777"/><path d="M2 24l10-10 3 3-10 10z" fill="#e8b020" stroke="#553"/></svg></div>
      <div class="mt"><svg class="mi2" viewBox="0 0 24 24"><rect x="1" y="1" width="22" height="22" fill="#f2d878" stroke="#222" stroke-width="1.500"/><text x="12" y="16" class="chev">&gt;&gt;&gt;</text></svg></div>
    </div>
    <div class="msg">A new model database has been created.
The model "Model-1" has been created.</div>
    <svg class="sizegrip" viewBox="0 0 12 12"><path d="M9 2h2v2H9zM5 6h2v2H5zM9 6h2v2H9zM1 10h2v2H1zM5 10h2v2H5zM9 10h2v2H9z" fill="#b8b8b8"/></svg>
  </footer>
</div>
</body>
</html>
```

FILE: styles.css
```css
* { box-sizing: border-box; }
html, body { margin: 0; padding: 0; }
body { width: 1366px; height: 708px; overflow: hidden; background: #f0f0f0; font: 11.300px "Noto Sans", "Liberation Sans", sans-serif; color: #111128; }
.defs { position: absolute; width: 0; height: 0; }
.sy { font: italic 8px "Liberation Serif", serif; fill: #111; }
.sg { font: italic bold 14px "Liberation Serif", serif; fill: #111; }
.st { font: bold 9px "Liberation Sans", sans-serif; fill: #111; }
.st2 { font: bold 8px "Liberation Sans", sans-serif; fill: #111; }
.sx { font: bold 7.500px "Liberation Mono", monospace; fill: #111; }
.wq { font: bold 9px "Liberation Sans", sans-serif; fill: #111; }
.app { width: 1366px; height: 708px; display: flex; flex-direction: column; border-top: 1px solid #1f2c44; border-bottom: 1px solid #1f2533; background: #fcfcfc; }

.menubar { height: 25px; flex: none; display: flex; align-items: center; background: linear-gradient(to right, #fbfbfb, #f0f0f0 65%); border-bottom: 1px solid #b4b4b4; position: relative; padding-left: 5px; }
.appicon { width: 15px; height: 15px; margin-top: -1px; }
.menus { display: flex; margin-left: 10px; line-height: 25px; }
.m { margin-right: 16px; white-space: nowrap; }
.m:nth-child(n+9) { position: relative; left: 1px; }
.whatsthis { width: 14px; height: 14px; margin: 5px 0 0 0; }
.winbtns { margin-left: auto; display: flex; gap: 5px; padding-right: 5px; }
.wb { width: 15px; height: 14px; display: block; background: linear-gradient(#e8f0f8, #d2e0ee); border: 1px solid #aebccc; }
.wb svg { display: block; width: 13px; height: 12px; }

.toolbars { height: 56px; flex: none; display: flex; }
.tb-rows { width: 1023px; flex: none; }
.tb-fill { flex: 1; background: #f0f0f0; border-left: 1px solid #b4b4b4; }
.tb-row { height: 28px; display: flex; }
.tb-row2 { justify-content: flex-end; }
.tg { height: 27px; display: flex; align-items: center; background: linear-gradient(to right, #f9f9f9, #efefef); border-bottom: 1px solid #b8b8b8; }
.tg-file { width: 252px; border-right: 1px solid #b8b8b8; padding-left: 3px; height: 28px; }
.tg-view { width: 724px; margin-left: 47px; padding-left: 3px; height: 28px; }
.tg-sel { width: 365px; height: 28px; padding-left: 3px; }
.grip { display: block; flex: none; width: 2px; height: 16px; background: repeating-linear-gradient(#a4a4a4 0 3px, transparent 3px 6px); margin-right: 3px; }
.sep { display: block; flex: none; width: 1px; align-self: stretch; background: #bcbcbc; margin-right: 3px; }
.sep-soft { align-self: center; height: 18px; margin: 0 0 0 2px; }
.i { width: 26px; height: 26px; flex: none; display: block; }
.i-pal { margin-left: -2px; }
.i-sh { margin-left: 2px; }
.i-cur { width: 22px; margin-left: 7px; }
.i-g1 { margin-left: -1px; width: 22px; }
.i-w { width: 27px; }
.i-n { width: 24px; }
.drop { width: 10px; height: 6px; margin-right: 1px; flex: none; display: block; border-top: 5px solid #111; border-left: 5px solid transparent; border-right: 5px solid transparent; }

.combo { display: flex; align-items: stretch; height: 25px; background: #fff; border: 2px solid #9a9a9a; flex: none; }
.ctext { flex: 1; line-height: 20px; padding-left: 2px; white-space: nowrap; }
.carrow { width: 11px; background: #e2e2e2; border-left: 1px solid #9a9a9a; position: relative; flex: none; }
.carrow::after { content: ""; position: absolute; left: 1px; top: 8px; border-top: 5px solid #111; border-left: 4px solid transparent; border-right: 4px solid transparent; }
.combo-def { width: 120px; margin-left: 2px; }
.combo-all { width: 106px; height: 26px; background: #b0cbea; border: 1px solid #a8bcd4; display: flex; align-items: center; padding-left: 3px; flex: none; margin-left: -4px; font-family: "Liberation Sans", sans-serif; font-size: 13px; justify-content: space-between; color: #1a1a30; }
.allarrow { width: 11px; height: 22px; margin-right: 1px; background: #e8eef6; border: 1px solid #c0c8d4; position: relative; }
.allarrow::after { content: ""; position: absolute; left: 1px; top: 8px; border-top: 5px solid #a8a8a8; border-left: 4px solid transparent; border-right: 4px solid transparent; }

.workspace { flex: none; display: flex; height: 533px; }
.leftpanel { width: 320px; flex: none; padding: 6px 0 0 2px; background: linear-gradient(#fdfdfd, #fbfbfb); }
.tabs { display: flex; align-items: flex-end; height: 23px; }
.tab { height: 20px; line-height: 19px; padding: 0 7px; border: 1px solid #aaa; border-bottom: none; background: linear-gradient(#f0f0f0, #dcdcdc); margin-right: 1px; white-space: nowrap; }
.tab:nth-child(2) { width: 52px; text-align: center; padding: 0; }
.tab:nth-child(3) { width: 98px; text-align: center; padding: 0; }
.tab-on { height: 23px; line-height: 22px; width: 52px; padding: 0; text-align: center; background: #fff; margin-right: 0; margin-bottom: -1px; position: relative; border-left: 2px solid #a8a8a8; }
.panel { width: 312px; height: 502px; border: 1px solid #a8a8a8; border-left-width: 2px; background: #fdfdfd; display: flex; flex-direction: column; }
.dbbar { height: 33px; flex: none; display: flex; align-items: flex-start; padding: 6px 0 0 1px; position: relative; }
.dbcombo { width: 213px; height: 23px; display: flex; align-items: stretch; background: #fff; border: 1px solid #c4c4c4; flex: none; }
.dbcombo .ctext { padding-left: 2px; line-height: 20px; }
.dbcombo .carrow { background: #e2e2e2; border: 2px solid #9a9a9a; width: 12px; }
.dbcombo .carrow::after { left: 0; top: 7px; }
.dbicon { width: 18px; height: 16px; margin: 3px 0 0 2px; flex: none; }
.updn { width: 14px; height: 22px; margin-left: 4px; flex: none; }
.dbtool { width: 18px; height: 16px; margin-top: 3px; flex: none; }
.dbt1 { margin-left: 7px; }
.dbt2 { margin-left: 8px; }
.dbt3 { margin-left: 9px; height: 18px; }
.treebox { flex: 1; min-height: 0; display: flex; border-top: 1px solid #a8a8a8; }
.tree { flex: 1; overflow: hidden; position: relative; background: #fff; }
.tree::before { content: ""; position: absolute; left: 8px; top: 15px; bottom: 0; border-left: 1px dotted #8a8a8a; }
.row { height: 19px; display: flex; align-items: center; white-space: nowrap; position: relative; }
.l0 { padding-left: 4px; }
.l1 { padding-left: 22px; }
.l1::before { content: ""; position: absolute; left: 26px; top: -4px; height: 5px; border-left: 1px dotted #8a8a8a; }
.l2 { padding-left: 38px; }
.exp { width: 9px; height: 9px; flex: none; border: 1px solid #a4a4a4; background: linear-gradient(#fff, #ddd); position: relative; display: block; }
.exp::before { content: ""; position: absolute; left: 1px; top: 3px; width: 5px; height: 1px; background: #203070; }
.plus::after { content: ""; position: absolute; left: 3px; top: 1px; width: 1px; height: 5px; background: #203070; }
.stub { width: 5px; flex: none; height: 1px; border-bottom: 1px dotted #8a8a8a; margin-left: 4px; display: block; }
.ti { width: 20px; height: 19px; flex: none; margin-left: 1px; display: block; }
.lb { margin: 0 0 2px 3px; line-height: 17px; padding: 0 1px; }
.lb0 { margin-left: 4px; }
.lb1 { margin-left: 3px; }
.cur { border-bottom: 2px solid #000; line-height: 15px; margin-top: 1px; margin-bottom: 0; }
.sel { background: #3d95ee; color: #fff; outline: 1px dotted #cfe3fa; outline-offset: -1px; padding: 0 2px 0 1px; height: 18px; line-height: 17px; margin-bottom: 0; }
.vscroll { width: 15px; flex: none; margin-right: 1px; display: flex; flex-direction: column; background: #f0f0f0; }
.sarrow { height: 18px; flex: none; position: relative; display: block; }
.sup::after { content: ""; position: absolute; left: 4px; top: 8px; border-bottom: 4px solid #555; border-left: 3.500px solid transparent; border-right: 3.500px solid transparent; }
.sdn::after { content: ""; position: absolute; left: 4px; top: 6px; border-top: 4px solid #555; border-left: 3.500px solid transparent; border-right: 3.500px solid transparent; }
.thumb { height: 311px; flex: none; background: linear-gradient(to right, #e8e8e8, #fbfbfb 35%, #c8c8c8); border: 1px solid #a8a8a8; border-radius: 2px; position: relative; display: block; }
.thumb i { position: absolute; left: 3px; top: 150px; width: 7px; height: 7px; background: repeating-linear-gradient(#666 0 1px, transparent 1px 3px); }
.strack { flex: 1; display: block; }

.right { flex: 1; display: flex; flex-direction: column; min-width: 0; }
.context { height: 32px; flex: none; display: flex; align-items: center; background: linear-gradient(#ffffff, #f0f0f0); padding-left: 8px; }
.clabel { white-space: nowrap; flex: none; padding-bottom: 2px; }
.cl-mod { width: 48px; }
.cb-mod { width: 108px; }
.cl-model { width: 41px; margin-left: 13px; }
.cb-model { width: 128px; }
.cl-part { width: 28px; margin-left: 13px; }
.cb-part { width: 88px; }
.spin { width: 11px; flex: none; border-right: 1px solid #d8d8d8; position: relative; display: block; }
.spin::before { content: ""; position: absolute; left: 1px; top: 2px; border-bottom: 6px solid #7a8ab8; border-left: 4px solid transparent; border-right: 4px solid transparent; }
.spin::after { content: ""; position: absolute; left: 1px; bottom: 2px; border-top: 6px solid #7a8ab8; border-left: 4px solid transparent; border-right: 4px solid transparent; }
.spin-off::before { border-bottom-color: #c0c0c0; }
.spin-off::after { border-top-color: #c0c0c0; }
.mid { flex: 1; min-height: 0; display: flex; }
.toolstrip { width: 63px; flex: none; padding: 4px 0 0 3px; background: linear-gradient(to right, #fdfdfd, #ececec); overflow: hidden; }
.tr { display: flex; height: 28px; }
.g1 { margin-top: 1px; }
.g4 { margin-top: 4px; }
.g5 { margin-top: 5px; }
.si { width: 28px; height: 28px; flex: none; display: block; }
.ts { border: none; height: 1px; margin: 0 0 0 -1px; width: 58px; background: #b0b0b0; }
.ts + .tr { margin-top: 5px; }
.tr + .ts { margin-top: 1px; }

.viewport { flex: 1; position: relative; overflow: hidden; margin-right: 1px; border-top: 1px solid #444c58; border-left: 1px solid #4a5564; background: linear-gradient(#1d2d46 0%, #1f2f48 44%, #243450 50%, #2d3f5a 55%, #a0afc8 100%); }
.vp-line { position: absolute; left: 488px; top: 350px; width: 3px; height: 110px; }
.triad-tr { position: absolute; left: 892px; top: 0; width: 70px; height: 80px; }
.tx { font: bold 8px "Liberation Mono", monospace; fill: #f0e820; text-anchor: middle; }
.triad-bl { position: absolute; left: 67px; top: 382px; width: 64px; height: 64px; }
.bx { font: bold 10px "Liberation Mono", monospace; fill: #fff; text-anchor: middle; }

.dialog { position: absolute; left: 348px; top: 11px; width: 324px; height: 342px; padding: 0 5px 5px 5px; border: 1px solid #2e3a4c; border-radius: 5px; background: linear-gradient(100deg, #5c6f88 0%, #3e4e66 40%, #55677f 60%, #3e4e66 100%); box-shadow: 0 0 8px rgba(0, 0, 0, .35); display: flex; flex-direction: column; }
.dtitle { height: 27px; flex: none; display: flex; align-items: center; position: relative; padding-bottom: 2px; }
.dicon { width: 16px; height: 16px; margin-left: 1px; flex: none; }
.dname { margin-left: 5px; color: #1c1c1c; text-shadow: 0 0 6px #fff, 0 0 6px #fff, 0 0 8px #fff; }
.dclose { position: absolute; right: 0; top: -1px; width: 47px; height: 20px; border: 1px solid #3a4658; border-top: none; border-radius: 0 0 4px 4px; text-align: center; color: #fff; font: bold 12px "DejaVu Sans", sans-serif; line-height: 18px; text-shadow: 0 0 3px #000; }
.dbody { flex: 1; border: 1px solid #1c2430; background: linear-gradient(120deg, #fdfdfd, #f0f0f0); padding: 0 5px; display: flex; flex-direction: column; min-height: 0; }
.drow { height: 23px; flex: none; display: flex; align-items: center; color: #111128; padding-left: 1px; }
.drow:first-child { margin-top: 2px; }
.dk { width: 43px; flex: none; }
.dsep { border: none; height: 1px; background: #a8a8a8; margin: 0; flex: none; }
.drow + .dsep { margin-top: 2px; }
.dcontent { flex: 1; min-height: 0; display: flex; justify-content: space-between; align-items: flex-start; }
.section { width: 210px; height: 221px; flex: none; display: block; }
.ax { font: 11px "Liberation Sans", sans-serif; fill: #111; }
.rfield { display: flex; align-items: center; margin: 5px -1px 0 0; }
.rl { font-size: 11px; margin-right: 5px; }
.rinput { width: 68px; height: 23px; line-height: 21px; border: 1px solid #b4b4b4; background: #fff; padding-left: 2px; color: #000; display: block; }
.dbtns { height: 33px; flex: none; display: flex; justify-content: space-between; padding: 6px 47px 0 46px; }
.btn { width: 54px; height: 21px; line-height: 19px; text-align: center; border: 1px solid #8a8a8a; border-radius: 2px; background: linear-gradient(#f6f6f6, #dadada); color: #111128; display: block; }
.btn-ok { border-color: #3c7fb1; background: linear-gradient(#e6f4fc, #a8d8f4); }

.prompt { height: 33px; flex: none; display: flex; align-items: center; padding-left: 6px; gap: 3px; background: linear-gradient(#fefefe, #f0f0f0); }
.pbtn { width: 19px; height: 22px; border: 1px solid #b0b0b0; border-radius: 2px; background: linear-gradient(#fff, #ececec); display: block; flex: none; }
.pbtn svg { width: 17px; height: 20px; display: block; }
.simulia { margin-left: auto; display: flex; align-items: center; padding-right: 3px; }
.dsmark { width: 22px; height: 24px; flex: none; }
.simtext { font: italic 11.500px "DejaVu Sans", sans-serif; color: #44525f; letter-spacing: 1px; margin: 7px 0 0 26px; display: block; transform: scaleX(1.35); transform-origin: right center; }

.bottom { flex: 1; display: flex; position: relative; background: linear-gradient(#fdfdfd, #f2f2f2 40%); padding: 4px 0 3px 2px; }
.msgtabs { width: 38px; flex: none; }
.mt { width: 34px; height: 35px; margin-left: 2px; border: 1px solid #a8a8a8; display: flex; align-items: center; justify-content: center; background: #f0f0f0; }
.mt-on { width: 38px; margin-left: 0; height: 38px; background: #fbfbfb; border-right: none; }
.mi { width: 24px; height: 28px; }
.mi2 { width: 24px; height: 24px; }
.chev { font: bold 11px "Liberation Mono", monospace; text-anchor: middle; fill: #111; }
.msg { width: 1307px; height: 84px; border: 1px solid #a8a8a8; border-width: 1px 1px 1px 2px; background: #fff; padding: 4px 0 0 4px; font: 13.330px/13px "Liberation Mono", monospace; letter-spacing: -0.05px; color: #111; white-space: pre; }
.sizegrip { position: absolute; right: 1px; bottom: 1px; width: 12px; height: 12px; }
```
